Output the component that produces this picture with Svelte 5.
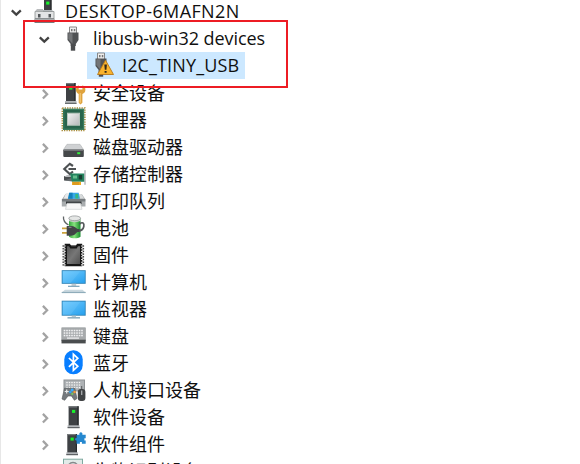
<script>
  const rows = [
    { text: 'DESKTOP-6MAFN2N', icon: 'pc', level: 0, open: true, spacing: 0.37 },
    { text: 'libusb-win32 devices', icon: 'usb', level: 1, open: true, spacing: -0.06 },
    { text: 'I2C_TINY_USB', icon: 'warn', level: 2, selected: true, spacing: 0.13 },
    { text: '安全设备', icon: 'security', level: 1 },
    { text: '处理器', icon: 'cpu', level: 1 },
    { text: '磁盘驱动器', icon: 'disk', level: 1 },
    { text: '存储控制器', icon: 'storage', level: 1 },
    { text: '打印队列', icon: 'printer', level: 1 },
    { text: '电池', icon: 'battery', level: 1 },
    { text: '固件', icon: 'firmware', level: 1 },
    { text: '计算机', icon: 'computer', level: 1 },
    { text: '监视器', icon: 'monitor', level: 1 },
    { text: '键盘', icon: 'keyboard', level: 1 },
    { text: '蓝牙', icon: 'bluetooth', level: 1 },
    { text: '人机接口设备', icon: 'hid', level: 1 },
    { text: '软件设备', icon: 'software', level: 1 },
    { text: '软件组件', icon: 'component', level: 1 },
    { text: '生物识别设备', icon: 'biometric', level: 1 }
  ];
  const pins = [4, 6.7, 9.4, 12.1, 14.8, 17.5, 20.2, 22.9];
  const keys = [4.5, 7, 9.5, 12, 14.5, 17, 19.5, 22];
</script>

{#snippet tower(x, y, w, h)}
  <rect {x} {y} width={w} height={h} fill="#3e4144" />
  <rect {x} {y} width={w} height="1.2" fill="#777b7e" />
  <rect x={x + w - 1.2} {y} width="1.2" height={h} fill="#25282a" />
  <path d={`M${x - 1} ${y + h - 1}h${w + 2}v3h-${w + 2}z`} fill="#b3b7ba" />
  <path d={`M${x - 1} ${y + h + 1.3}h${w + 2}`} stroke="#55595c" stroke-width="1" />
  <rect x={x + w / 2 - 1.6} y={y + 3.6} width="3.2" height="3" fill="#18f22b" />
{/snippet}

{#snippet plug()}
  <path d="M9.5 8V1h7v7" fill="#eee" stroke="#898989" stroke-width="1" />
  <path d="M11 3h1.5v2.2H11zM13.8 3h1.5v2.2h-1.5z" fill="#777" />
  <path d="M7.5 6.5h11v7.5l-2.7 4v2h-5.1v-2l-3.2-4z" fill="#505254" />
  <path d="M8.3 7.2h4.2v10.5L8.3 13z" fill="#737577" />
  <path d="M10.8 18h4.4v6.7h-4.4z" fill="#4b4d4f" />
{/snippet}

{#snippet screen(y, h)}
  <rect x="1.7" {y} width="24" height={h} fill="#2b82b7" />
  <rect x="2.6" y={y + 0.9} width="22.2" height={h - 1.8} fill="url(#blue)" />
  <path d={`M2.6 ${y + 0.9}h18l-10 ${h - 1.8}h-8z`} fill="#8bd6ff" opacity=".2" />
{/snippet}

<svg class="defs" aria-hidden="true">
  <defs>
    <linearGradient id="blue" x1="0" y1="0" x2="1" y2="1"><stop stop-color="#72cbff" /><stop offset="1" stop-color="#27a0ed" /></linearGradient>
    <linearGradient id="metal" x1="0" y1="0" x2="1" y2="1"><stop stop-color="#f4f4f4" /><stop offset="1" stop-color="#b5b8ba" /></linearGradient>
    <linearGradient id="chip" x1="0" y1="0" x2="1" y2="1"><stop stop-color="#555" /><stop offset=".5" stop-color="#777" /><stop offset="1" stop-color="#505050" /></linearGradient>
    <linearGradient id="cell"><stop stop-color="#35a63f" /><stop offset=".45" stop-color="#86e37d" /><stop offset="1" stop-color="#168a2c" /></linearGradient>
  </defs>
</svg>

<main>
  {#each rows as row}
    <div class="row level{row.level}">
      <span class="twist">
        {#if row.open}
          <svg viewBox="0 0 24 27"><path d="M3.8 11.4 8.3 15.7l4.5-4.3" fill="none" stroke="#424242" stroke-width="2.3" /></svg>
        {:else if !row.selected}
          <svg viewBox="0 0 24 27"><path d="m6.9 9.9 4.2 4.3-4.2 4.3" fill="none" stroke="#a3a3a3" stroke-width="2.3" /></svg>
        {/if}
      </span>
      <span class="item" class:selected={row.selected}>
        <svg class="icon" viewBox="0 0 28 27">
          {#if row.icon === 'pc'}
            {@render tower(12, -1, 7.5, 13)}
            <path d="M3 12.5h19v7H3z" fill="#e3e4e5" stroke="#8c8f91" stroke-width=".8" />
            <path d="M2.5 19.5h20V24h-20z" fill="#777b7d" />
            <path d="M3 20h19v1.8H3z" fill="#a9acae" />
            <path d="M6 15h2.5v3.5H6zM16.5 15H19v3.5h-2.5z" fill="#55595c" />
            <path d="M3 12.3 5 10h6v2.3z" fill="#b9bbbd" />
          {:else if row.icon === 'usb'}
            {@render plug()}
          {:else if row.icon === 'warn'}
            {@render plug()}
            <path d="m17.5 8.2 8 14.3h-16z" fill="#f9b32d" stroke="#b77818" stroke-width=".9" stroke-linejoin="round" />
            <path d="M16.3 12.5h2.6l-.5 5.3h-1.6zM16.6 19h2v1.8h-2z" fill="#302719" />
          {:else if row.icon === 'security'}
            {@render tower(6, 3, 9.5, 19)}
            <path fill-rule="evenodd" d="M18.7 5.2v4.2h3.7V5.2c2 .8 3 2.4 3 4.5 0 2.1-1.2 3.5-3 4.3v8.7L20.5 24.5 18.7 22.7v-8.6c-1.8-1-2.7-2.4-2.7-4.4 0-2.1 1-3.7 2.7-4.5z" fill="#dfa33d" />
            <path d="M20.2 13v9.7" stroke="#f9d183" />
          {:else if row.icon === 'cpu'}
            <rect x="2.3" y="1" width="22.6" height="22.6" fill="none" stroke="#a98d3b" stroke-width="1.5" stroke-dasharray="1.3 1.1" />
            <rect x="3" y="1.7" width="21.2" height="21.2" fill="#28644c" />
            <rect x="3.8" y="2.5" width="19.6" height="19.6" fill="none" stroke="#3b8062" />
            <rect x="7.5" y="6.2" width="12" height="12" fill="url(#metal)" stroke="#b7c6bd" />
          {:else if row.icon === 'disk'}
            <path d="M7 10.3h13l3.7 5.5H3.3z" fill="#cfd1d3" stroke="#a6a9ab" stroke-width=".5" />
            <rect x="3.3" y="15.5" width="20.5" height="7.5" rx="1" fill="#45484a" />
            <path d="M4 16.2h19" stroke="#888b8d" />
            <rect x="17.2" y="18.2" width="3" height="2" fill="#35ec3c" />
          {:else if row.icon === 'storage'}
            <path d="M4 15h8v4.5H4z" fill="#4b4e50" />
            <path d="m4 16 3-2h5v2z" fill="#b7babc" />
            <path d="M13 5 9.8 2.8 4.3 8l5.5 5 3.2-2.5M8.5 8h7.5" fill="none" stroke="#4d5153" stroke-width="2.2" />
            <path d="m4.5 19.5 8-3v4z" fill="#666b6e" />
            <path d="M10 12.5h14.5v8.3H12z" fill="#23835e" />
            <path d="M13 14.5h4v3h-4z" fill="#65bd8d" /><path d="M18.7 14h3.5v4.5h-3.5z" fill="#193d31" />
            <path d="M12 20.8h9V24h-9z" fill="#efaa24" />
            <path d="M14 21v3m2-3v3m2-3v3" stroke="#b67b13" stroke-width=".6" />
            <path d="M25 9.3v14.5" stroke="#aaafb2" stroke-width="1.3" />
          {:else if row.icon === 'printer'}
            <path d="M5.5 6h16.3l3.7 5.5v7H1.8v-7z" fill="#a9adaf" />
            <path d="M6 5h4l-1.2 5.5H3.8z" fill="#e8eaeb" /><path d="M18.5 6h3l2.5 4.5h-4z" fill="#d8dbdc" />
            <path d="M9.3 4.7h9.4l1.1 6H8z" fill="#38a9e8" /><path d="M9.3 4.7h3.3v6H8z" fill="#1681bc" /><path d="M15.3 6h2.8l.4 4.5h-3.2z" fill="#37b982" />
            <path d="M2 11h23.3v2.5H2z" fill="#777c7f" />
            <path d="M6 13.5h15.5V16H6z" fill="#303437" />
            <path d="M7 15.3h13.5l1.5 6H5.5z" fill="#f7f7f7" stroke="#c4c7c8" stroke-width=".6" />
          {:else if row.icon === 'battery'}
            <path d="M3.5 1.5c-.5 4 1.5 6.5 5 8.5" fill="none" stroke="#606466" stroke-width="1.3" />
            <path d="M9 3.5h11.5v18.2c-3 2-8.5 2-11.5 0z" fill="url(#cell)" />
            <path d="M9 3.5c3 1.7 8.5 1.7 11.5 0V6C17 7.5 12 7.5 9 6z" fill="#c8ceca" />
            <ellipse cx="14.7" cy="3.3" rx="5.9" ry="2.4" fill="#e4e6e5" stroke="#8a8e8f" stroke-width=".7" />
            <path d="M19.5 9c3-2.5 5-1 4.3 2.5-.5 3-3 4.5-6.8 4.5" fill="none" stroke="#55595b" stroke-width="1.7" />
            <path d="M2 13.3h6M2 17.8h6" stroke="#cca23e" stroke-width="1.8" />
            <path d="M6.7 11h4.5c3 0 4.5 1.8 6.3 3h2v3h-2c-2 1.5-3 3.7-6.5 3.7H6.7z" fill="#414446" />
            <path d="M8.5 12.3h3" stroke="#8a8e90" />
          {:else if row.icon === 'firmware'}
            {#each pins as y}<path d={`M2.5 ${y}h21.6`} stroke="#444" stroke-width="1.5" />{/each}
            <path d="M4.7 1.7h5.2l1.4 2.6h4.4L17 1.7h5.2v22.6H4.7z" fill="#171717" />
            <path d="M7 4.2h2l1.3 2.3h6.4L18 4.2h2V22H7z" fill="url(#chip)" />
            {#each pins as y}<path d={`M3.8 ${y}h1.9M21 ${y}h1.9`} stroke="#ddd" stroke-width="1.1" />{/each}
          {:else if row.icon === 'computer'}
            {@render screen(1.2, 13.6)}
            <path d="M11.5 14.8h4.7v2.5h-4.7z" fill="#c5ccd0" />
            <path d="M8 16.7h11.5V18H8z" fill="#83a8bd" />
            <path d="M5 20.7h17.5l3 2.8H1.7z" fill="#c9d8df" /><path d="M1.7 23.5h24" stroke="#8facba" stroke-width="1.2" />
          {:else if row.icon === 'monitor'}
            {@render screen(4.7, 15)}
            <path d="M11.7 19.7h4.3v2h-4.3z" fill="#bac7cd" /><path d="M7.5 21h12.5v1.6H7.5z" fill="#8fafc0" />
          {:else if row.icon === 'keyboard'}
            <rect x="1.8" y="4.8" width="23.6" height="13" fill="#a7aaac" stroke="#929597" stroke-width=".6" />
            <path d="M1.5 16.7h24.2v3.7H1.5z" fill="#4a4d4f" />
            {#each [7.5, 10, 12.5] as y}{#each keys as x}<rect x={x - 0.8} y={y - 0.7} width="1.6" height="1.5" fill="#f2f3f4" />{/each}{/each}
            <path d="M7 15.1h12" stroke="#f2f3f4" stroke-width="1.2" />
          {:else if row.icon === 'bluetooth'}
            <rect x="4.3" y=".3" width="18.4" height="24" rx="9.1" fill="#087eff" />
            <path d="m8.9 8 8.9 8.3-4.4 4.1V4.2l4.4 4.1-8.9 8.5" fill="none" stroke="#fff" stroke-width="1.7" />
          {:else if row.icon === 'hid'}
            <rect x="4" y="3" width="20.5" height="11" fill="#adb1b4" stroke="#8d9194" />
            {#each [5.5, 8, 10.5] as y}{#each keys.slice(1, 7) as x}<rect x={x - 0.7} y={y - 0.6} width="1.4" height="1.3" fill="#f5f5f5" />{/each}{/each}
            <path d="M4.5 11.3h10.3l2.2 10.2-2.6 1.8-2.9-4.3H8l-3.3 4.3-2.7-1.3z" fill="#74797d" stroke="#505558" stroke-width=".6" />
            <path d="M4.7 14.5h4M6.7 12.5v4" stroke="#e8eaeb" stroke-width="1.2" />
            <circle cx="12.2" cy="13" r="1.4" fill="#37adff" /><circle cx="14.6" cy="15" r="1.3" fill="#f29b35" /><circle cx="10.4" cy="15" r="1.3" fill="#31a4ee" /><circle cx="12.3" cy="16.9" r="1.1" fill="#74ca5e" />
            <path d="M21.7 12V9" stroke="#55595c" /><rect x="17.8" y="12" width="7.6" height="12" rx="3" fill="#3f4244" />
            <path d="M21.7 13.5V18" stroke="#a8acaf" stroke-width="1.3" />
          {:else if row.icon === 'software'}
            {@render tower(8.6, 2.3, 10, 20)}
          {:else if row.icon === 'component'}
            {@render tower(7.3, 3, 9.7, 19.3)}
            <path d="M16.5 3.8h3c-1.3-3.4 4-3.4 2.8 0h3.4v3.4h-1.3v2.4h1.3v3.1h-3.8v-1.8h-2v1.8h-3.4V9.4c-1.7 1-2.3-3 0-2.2z" fill="#2588cf" />
          {:else if row.icon === 'biometric'}
            <rect x="3.5" y="1.2" width="19" height="24" fill="#e2eae8" stroke="#7eaaa0" />
            <path d="M7 12c0-10 12-10 12 0M10 13c0-6 6-6 6 0" fill="none" stroke="#85898b" stroke-width="1.3" />
          {/if}
        </svg>
        <span class="label" class:latin={row.spacing !== undefined} style:letter-spacing={row.spacing === undefined ? null : `${row.spacing}px`}>{row.text}</span>
      </span>
    </div>
  {/each}
  <div class="frame"></div>
</main>

<style>
  :global(body) { background: #fff; overflow: hidden; }
  main {
    position: relative;
    box-sizing: border-box;
    width: 580px;
    height: 464px;
    overflow: hidden;
    background: #fff;
    border-left: 1px solid #e7e7e7;
    color: #101010;
    font-size: 18px;
  }
  .defs { position: absolute; width: 0; height: 0; }
  .row { display: flex; height: 27px; align-items: stretch; }
  .row:first-child { margin-top: -1px; }
  .level0 { padding-left: 7px; }
  .level1 { padding-left: 35px; }
  .level2 { padding-left: 62px; }
  .twist { flex: 0 0 24px; height: 27px; }
  .twist svg { display: block; width: 24px; height: 27px; }
  .item { display: flex; align-items: flex-start; white-space: nowrap; }
  .selected { height: 27px; margin-top: -1px; background: #cce8ff; padding: 0 6px 0 1px; }
  .selected .icon { margin-right: 6px; }
  .selected .label { line-height: 27px; }
  .icon { flex: none; width: 28px; height: 27px; margin-right: 5px; }
  .label { line-height: 25px; font-family: 'Noto Sans CJK SC', sans-serif; }
  .latin { font-family: 'Open Sans', 'Noto Sans', sans-serif; }
  .frame {
    position: absolute;
    left: 22px;
    top: 20px;
    width: 265px;
    height: 68px;
    box-sizing: border-box;
    border: 2px solid #ed1c24;
  }
</style>
